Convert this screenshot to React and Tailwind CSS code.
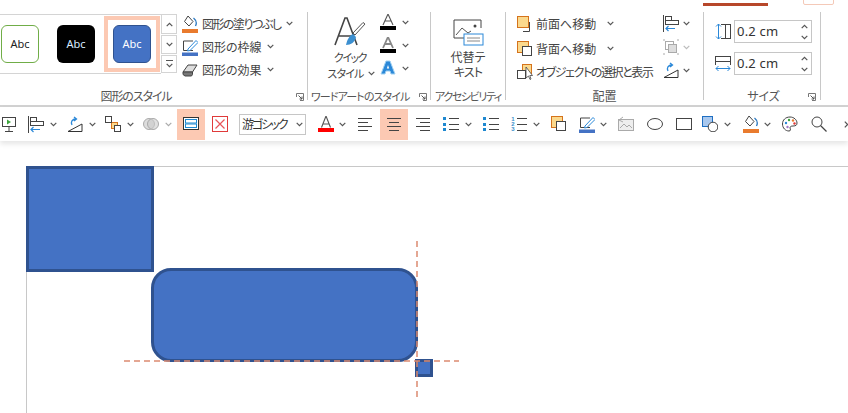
import React from "react";

const jp = "font-['Noto_Sans_CJK_JP','Liberation_Sans',sans-serif] [font-feature-settings:'palt']";

const Chev = ({ className = "", color = "#555" }) => (
  <svg width="7" height="5" viewBox="0 0 7 5" className={`shrink-0 ${className}`}>
    <path d="M.7 .8 3.5 3.6 6.3 .8" fill="none" stroke={color} strokeWidth="1.2" />
  </svg>
);

const Ic = ({ w = 16, h = 16, className = "", children }) => (
  <svg width={w} height={h} viewBox={`0 0 ${w} ${h}`} className={`shrink-0 ${className}`}>
    {children}
  </svg>
);

const Launcher = ({ className = "" }) => (
  <Ic w={8} h={8} className={className}>
    <path d="M.5 4V.5H7.5V7.5H4" fill="none" stroke="#777" />
    <path d="M2.5 2.5 6 6M6 3.5V6H3.5" fill="none" stroke="#555" />
  </Ic>
);

const Group = ({ label, w, children, launcher, labelClass = "", textClass = "text-[12px]" }) => (
  <div className={`${w} h-[88px] mt-[12px] border-r border-[#c8c8c8] flex flex-col shrink-0 relative`}>
    <div className="flex-1 min-h-0 flex">{children}</div>
    <div className={`h-[16px] -mb-[4px] flex items-center ${labelClass}`}>
      <span className={`leading-[16px] text-[#555] whitespace-nowrap ${textClass}`}>{label}</span>
      {launcher}
    </div>
  </div>
);

const Thumb = ({ className, text }) => (
  <div className={`w-[38px] h-[38px] rounded-[6px] flex items-center justify-center text-[11px] font-['Noto_Sans',sans-serif] ${className} ${text}`}>
    Abc
  </div>
);

const Cmd = ({ icon, label, chevClass = "ml-[5px]", textClass = "ml-[4px] text-[12px]" }) => (
  <div className="flex items-center h-[23px]">
    <div className="w-[16px] h-[18px] flex items-center justify-center">{icon}</div>
    <span className={`text-[#444] whitespace-nowrap ${textClass}`}>{label}</span>
    <Chev className={chevClass} />
  </div>
);

const BucketIcon = ({ bar = "#e97b2e" }) => (
  <Ic w={16} h={18}>
    <path d="M6 1 11 6.5 7 11 2.5 6.5Z" fill="#fff" stroke="#444" />
    <path d="M11.5 3c2.5 2 3.5 5 2 8" fill="none" stroke="#2b78c0" strokeWidth="1.3" />
    <rect y="14" width="16" height="4" fill={bar} />
  </Ic>
);

const PenIcon = () => (
  <Ic w={16} h={18}>
    <path d="M11 3H1.5V12.5H11" fill="none" stroke="#444" />
    <path d="M6 11 14 2.5 16 4.5 8 12.5 5.5 13Z" fill="#fff" stroke="#2b88d8" />
    <rect y="14.5" width="16" height="3.5" fill="#4472c4" />
  </Ic>
);

const EraserIcon = () => (
  <Ic w={16} h={16}>
    <path d="M1 10 6 3H15L10.5 10Z" fill="#ddd" stroke="#444" />
    <path d="M1 10V12.5L3 14H9.5L10.5 12.5V10Z" fill="#777" stroke="#444" />
  </Ic>
);

const BigA = () => (
  <Ic w={32} h={30}>
    <path d="M1 28 11 1H13L23 28M5 19H19" fill="none" stroke="#444" strokeWidth="1.6" />
    <path d="M29 5.5 31 7 21 18 19 16Z" fill="#fff" stroke="#555" />
    <path d="M12 28c1-5 3-9 7-11l3 3c-1 5-5 8-10 8Z" fill="#3b8fd0" />
  </Ic>
);

const SmallA = ({ outline, blue }) => (
  <Ic w={16} h={16}>
    {blue ? (
      <>
        <path d="M1 14 6 1H10L15 14H11L10 11H6L5 14Z" fill="#2b88d8" stroke="#9fd0f2" />
        <path d="M6.8 8.5 8 5 9.2 8.5Z" fill="#fff" />
      </>
    ) : (
      <>
        <path d="M3 11 8 0 13 11M5 7H11" fill="none" stroke={outline ? "#888" : "#555"} strokeWidth={outline ? 1.8 : 1.1} />
        <rect y="12" width="16" height="4" fill="#000" />
      </>
    )}
  </Ic>
);

const AltIcon = () => (
  <Ic w={31} h={27}>
    <path d="M20 19H1V1H28V9" fill="none" stroke="#444" />
    <path d="M3 16 9 9l6 5 3-2" fill="none" stroke="#555" />
    <circle cx="22" cy="7" r="1.5" fill="#444" />
    <rect x="11" y="15" width="19" height="11" fill="#fff" stroke="#2b88d8" />
    <path d="M14 19H27M14 22H27" stroke="#888" />
  </Ic>
);

const FrontIcon = () => (
  <Ic w={16} h={16}>
    <path d="M6 15.5H12.5V6" fill="none" stroke="#444" />
    <rect x=".5" y=".5" width="11" height="11" fill="#fbd98d" stroke="#d5731c" />
  </Ic>
);

const BackIcon = () => (
  <Ic w={16} h={16}>
    <rect x=".5" y=".5" width="11" height="11" fill="#fbd98d" stroke="#d5731c" />
    <rect x="5.5" y="5.5" width="9" height="9" fill="#fff" stroke="#444" />
  </Ic>
);

const SelectIcon = () => (
  <Ic w={16} h={16}>
    <rect x="5.5" y=".5" width="9" height="9" fill="#fbd98d" stroke="#d5731c" />
    <rect x=".5" y="6.5" width="8" height="8" fill="#fff" stroke="#444" />
    <path d="M9 3V14L11.5 12 13 15.5 14 15 12.8 11.5H15.5Z" fill="#fff" stroke="#444" strokeWidth=".8" />
  </Ic>
);

const AlignIcon = () => (
  <Ic w={16} h={17}>
    <path d="M.5 0V17" stroke="#444" />
    <rect x="2.5" y="1.5" width="6" height="4" fill="#fff" stroke="#444" />
    <rect x="2.5" y="5.5" width="13" height="4" fill="#fff" stroke="#444" />
    <path d="M12 13.5H3M5.5 11 3 13.5l2.5 2.5" fill="none" stroke="#2b88d8" strokeWidth="1.2" />
  </Ic>
);

const GroupIcon = () => (
  <Ic w={16} h={16}>
    <rect x="2.5" y="2.5" width="8" height="8" fill="none" stroke="#aaa" />
    <rect x="5.5" y="5.5" width="8" height="8" fill="#ddd" stroke="#aaa" />
    <path d="M0 1H2M14 1H16M0 15H2M14 15H16" stroke="#aaa" />
  </Ic>
);

const RotateIcon = () => (
  <Ic w={16} h={16}>
    <path d="M1 15.5 15 8V15.5Z" fill="#fff" stroke="#333" />
    <path d="M5 9C3.5 6 5 3 9 3M7 1 9.5 3 7 5" fill="none" stroke="#2b88d8" strokeWidth="1.3" />
  </Ic>
);

const HeightIcon = () => (
  <Ic w={16} h={17}>
    <path d="M3.5 1V16M1 3.5 3.5 1 6 3.5M1 13.5 3.5 16 6 13.5" fill="none" stroke="#2b88d8" />
    <rect x="10.5" y="1.5" width="5" height="14" fill="#fff" stroke="#444" />
    <path d="M6 1.5H10M6 15.5H10" stroke="#444" />
  </Ic>
);

const WidthIcon = () => (
  <Ic w={16} h={17}>
    <rect x=".5" y="1.5" width="15" height="5" fill="#fff" stroke="#444" />
    <path d="M.5 7V10M15.5 7V10" stroke="#444" />
    <path d="M1 13.5H15M3.5 11 1 13.5 3.5 16M12.5 11 15 13.5 12.5 16" fill="none" stroke="#2b88d8" />
  </Ic>
);

const Spin = ({ label }) => (
  <div className="w-[78px] h-[23px] border border-[#c6c6c6] flex items-center pl-[2px] bg-white">
    <span className="text-[13px] text-[#333] font-['Noto_Sans',sans-serif] flex-1 tracking-[0.2px]">{label}</span>
    <div className="w-[14px] flex flex-col items-center gap-[6px]">
      <Chev className="rotate-180" />
      <Chev />
    </div>
  </div>
);

const Lines = ({ rows }) => (
  <Ic w={16} h={14}>
    {rows.map((r, i) => (
      <path key={i} d={`M${r[0]} ${r[1]}.5H${r[2]}`} stroke="#444" />
    ))}
  </Ic>
);

const Bullets = () => (
  <Ic w={16} h={15}>
    {[0, 6, 11].map((y) => (
      <rect key={y} y={y} width="3" height="3" fill="#1e88d0" />
    ))}
    <path d="M6 1.5H16M6 7.5H16M6 12.5H16" stroke="#444" />
  </Ic>
);

const Numbers = () => (
  <div className="w-[16px] h-[15px] flex items-center gap-[2px]">
    <div className="w-[4px] flex flex-col items-center text-[6px] leading-[5px] font-bold text-[#3a90cc] font-['Liberation_Sans',sans-serif]">
      <span>1</span>
      <span>2</span>
      <span>3</span>
    </div>
    <Ic w={10} h={15}>
      <path d="M0 1.5H10M0 7.5H10M0 13.5H10" stroke="#444" />
    </Ic>
  </div>
);

const Toolbar = () => (
  <div className="h-[34px] flex items-center bg-white relative z-10 shadow-[0_3px_5px_rgba(0,0,0,0.10)]">
    <Ic className="ml-[2px]">
      <rect x=".5" y="1.5" width="13" height="9" fill="#fff" stroke="#444" />
      <path d="M5 3.5 9 6 5 8.5Z" fill="#3ca63c" />
      <path d="M7 11V15M3 15.5H11" stroke="#444" />
    </Ic>
    <span className="ml-[10px]"><AlignIcon /></span>
    <Chev className="ml-[6px]" />
    <span className="ml-[10px]"><RotateIcon /></span>
    <Chev className="ml-[6px]" />
    <Ic className="ml-[9px]">
      <rect x="6.5" y="6.5" width="6" height="6" fill="#fbd98d" stroke="#d5731c" />
      <rect x=".5" y=".5" width="6" height="6" fill="#fff" stroke="#444" />
      <rect x="9.5" y="9.5" width="6" height="6" fill="#fff" stroke="#444" />
    </Ic>
    <Chev className="ml-[6px]" />
    <Ic className="ml-[9px]">
      <circle cx="6" cy="8" r="5.5" fill="#ddd" stroke="#aaa" />
      <circle cx="10" cy="8" r="5.5" fill="#ccc" fillOpacity=".6" stroke="#aaa" />
    </Ic>
    <Chev className="ml-[6px]" color="#aaa" />
    <div className="ml-[5px] w-[28px] h-[31px] shrink-0 bg-[#fcc9b3] flex items-center justify-center">
      <Ic>
        <rect x=".5" y="1.5" width="15" height="12" fill="#fff" stroke="#333" />
        <rect x="2.5" y="3.5" width="11" height="3.5" fill="#fff" stroke="#1e88d0" />
        <rect x="2.5" y="8" width="11" height="3.5" fill="#fff" stroke="#1e88d0" />
      </Ic>
    </div>
    <Ic className="ml-[7px]">
      <rect x=".5" y=".5" width="15" height="15" fill="#fff" stroke="#e03a3a" />
      <path d="M3.5 3.5 12.5 12.5M12.5 3.5 3.5 12.5" stroke="#e8555a" strokeWidth="1.2" />
    </Ic>
    <div className="ml-[11px] w-[67px] h-[21px] shrink-0 border border-[#c6c6c6] flex items-center pl-[2px]">
      <span className="text-[12px] tracking-[-2px] text-[#333] whitespace-nowrap flex-1">游ゴシック</span>
      <Chev className="mr-[2px]" />
    </div>
    <Ic className="ml-[12px]">
      <path d="M3.5 11.5 8 0 12.5 11.5M5 8H11" fill="none" stroke="#555" strokeWidth="1.1" />
      <rect y="12" width="16" height="4" fill="#f00" />
    </Ic>
    <Chev className="ml-[5px]" />
    <span className="ml-[11px]"><Lines rows={[[1, 1, 15], [1, 5, 11], [1, 9, 15], [1, 13, 11]]} /></span>
    <div className="ml-[7px] w-[28px] h-[31px] shrink-0 bg-[#fcc9b3] flex items-center justify-center">
      <Lines rows={[[1, 1, 15], [3, 5, 13], [1, 9, 15], [3, 13, 13]]} />
    </div>
    <span className="ml-[7px]"><Lines rows={[[1, 1, 15], [5, 5, 15], [1, 9, 15], [5, 13, 15]]} /></span>
    <span className="ml-[12px]"><Bullets /></span>
    <Chev className="ml-[6px]" />
    <span className="ml-[11px]"><Bullets /></span>
    <span className="ml-[12px]"><Numbers /></span>
    <Chev className="ml-[6px]" />
    <span className="ml-[11px]"><BackIcon /></span>
    <span className="ml-[12px]"><PenIcon /></span>
    <Chev className="ml-[5px]" />
    <Ic className="ml-[11px]">
      <rect x=".5" y="3.5" width="15" height="11" fill="#eee" stroke="#aaa" />
      <path d="M2 12 6 8l3 3 2-2 3 3" fill="none" stroke="#aaa" />
      <path d="M1 4 5 1M5 6 1 4" fill="none" stroke="#aaa" />
    </Ic>
    <Ic w={16} h={12} className="ml-[13px]">
      <ellipse cx="8" cy="6" rx="7.5" ry="5.5" fill="#fff" stroke="#444" />
    </Ic>
    <Ic w={16} h={12} className="ml-[13px]">
      <rect x=".5" y=".5" width="15" height="11" fill="#fff" stroke="#444" />
    </Ic>
    <Ic className="ml-[10px]">
      <rect x=".5" y=".5" width="10" height="10" fill="#a9c8ee" stroke="#1f6fc2" />
      <circle cx="11" cy="11" r="4.8" fill="#fff" stroke="#444" />
    </Ic>
    <Chev className="ml-[6px]" />
    <span className="ml-[12px]"><BucketIcon /></span>
    <Chev className="ml-[5px]" />
    <Ic className="ml-[11px]">
      <path d="M8 1C3.5 1 .5 4 .5 8s3 7 6.5 7c2 0 1.5-2 1-3 0-1.5 1-2 3-2 3 0 4-1 4-3 0-3-3-6-7-6Z" fill="#fff" stroke="#444" />
      <circle cx="4" cy="7" r="1.2" fill="#2b88d8" />
      <circle cx="7" cy="4" r="1.2" fill="#3ca63c" />
      <circle cx="11" cy="4.5" r="1.2" fill="#e97b2e" />
      <circle cx="12.5" cy="7.5" r="1.2" fill="#e03a3a" />
      <circle cx="5.5" cy="11" r="1.2" fill="#a678c8" />
    </Ic>
    <Ic className="ml-[13px]">
      <circle cx="6" cy="6" r="5" fill="none" stroke="#444" />
      <path d="M9.5 9.5 15.5 15.5" stroke="#444" strokeWidth="1.2" />
    </Ic>
    <Chev className="ml-[16px] -rotate-90" />
  </div>
);

const Canvas = () => (
  <div className="relative flex-1 bg-white overflow-hidden">
    <div className="absolute left-[26px] top-[25px] right-0 h-px bg-[#c8c8c8]" />
    <div className="absolute left-[26px] top-[25px] bottom-0 w-px bg-[#c8c8c8]" />
    <div className="absolute left-[26px] top-[25px] w-[128px] h-[106px] bg-[#4472c4] border-[3px] border-[#2f528f]" />
    <div className="absolute left-[151px] top-[127px] w-[267px] h-[94px] bg-[#4472c4] border-[3px] border-[#2f528f] rounded-[20px]" />
    <div className="absolute left-[415px] top-[218px] w-[18px] h-[18px] bg-[#4472c4] border-[3px] border-[#2f528f]" />
    {/* dashed snap guides */}
    <svg width="2" height="160" className="absolute left-[416px] top-[100px]">
      <path d="M1 0V160" stroke="#dc8a70" strokeWidth="1.5" strokeDasharray="6 4" />
    </svg>
    <svg width="335" height="2" className="absolute left-[124px] top-[219px]">
      <path d="M0 1H335" stroke="#dc8a70" strokeWidth="1.5" strokeDasharray="6 4" />
    </svg>
  </div>
);

export default function App() {
  return (
    <div className={`w-[848px] h-[413px] overflow-hidden bg-white flex flex-col relative ${jp}`}>
      <div className="h-[105px] flex bg-white relative">
        <div className="absolute left-[703px] top-[3px] w-[65px] h-[3px] bg-[#b7472a]" />
        <div className="absolute left-[803px] -top-[6px] w-[31px] h-[11px] border border-[#f4c9b8] rounded-[2px]" />

        <Group w="w-[308px]" label="図形のスタイル" textClass="text-[12px] tracking-[-1.1px]" labelClass="justify-center relative pr-[35px]" launcher={<Launcher className="absolute right-[3px] top-[5px]" />}>
          <div className="flex items-start">
            <div className="mt-[2px] w-[161px] h-[60px] border-y border-[#d4d4d4] flex items-center relative">
              <Thumb className="ml-[1px] bg-white border border-[#70ad47]" text="text-[#222]" />
              <Thumb className="ml-[18px] bg-black" text="text-[#d8ecff]" />
              <div className="ml-[9px] w-[56px] h-[56px] border-[4px] border-[#fcc9b3] flex items-center justify-center">
                <Thumb className="bg-[#4472c4] border border-[#2f528f]" text="text-white" />
              </div>
            </div>
            <div className="mt-[2px] w-[16px] h-[60px] flex flex-col gap-[1px]">
              <div className="h-[20px] border border-[#d4d4d4] flex items-center justify-center"><Chev className="rotate-180" /></div>
              <div className="h-[19px] border border-[#d4d4d4] flex items-center justify-center"><Chev /></div>
              <div className="h-[18px] border border-[#d4d4d4] flex flex-col items-center justify-center gap-[2px]">
                <div className="w-[7px] h-px bg-[#555]" />
                <Chev />
              </div>
            </div>
            <div className="ml-[5px] flex flex-col">
              <Cmd icon={<BucketIcon />} label="図形の塗りつぶし" textClass="ml-[4px] text-[12px] tracking-[-1.5px]" />
              <Cmd icon={<PenIcon />} label="図形の枠線" />
              <Cmd icon={<EraserIcon />} label="図形の効果" />
            </div>
          </div>
        </Group>

        <Group w="w-[123px]" label="ワードアートのスタイル" textClass="text-[11px] tracking-[-0.9px]" labelClass="relative pl-[3px]" launcher={<Launcher className="absolute right-[3px] top-[5px]" />}>
          <div className="w-[72px] pl-[12px] flex flex-col items-center pt-[5px]">
            <BigA />
            <div className="mt-[2px] text-[11px] tracking-[-1.5px] leading-[16px] text-[#444] text-center">クイック</div>
            <div className="flex items-center text-[11px] tracking-[-0.8px] leading-[16px] text-[#444] ml-[2px]">
              スタイル<Chev className="ml-[4px]" />
            </div>
          </div>
          <div className="flex flex-col pt-[2px] gap-[7px]">
            <div className="flex items-center gap-[6px]"><SmallA /><Chev /></div>
            <div className="flex items-center gap-[6px]"><SmallA outline /><Chev /></div>
            <div className="flex items-center gap-[6px]"><SmallA blue /><Chev /></div>
          </div>
        </Group>

        <Group w="w-[75px]" label="アクセシビリティ" textClass="text-[11px] tracking-[-1.4px]" labelClass="justify-center">
          <div className="w-full flex flex-col items-center pt-[7px]">
            <AltIcon />
            <div className="mt-[3px] text-[12px] leading-[15px] text-[#444]">代替テ</div>
            <div className="text-[12px] tracking-[-1px] leading-[15px] text-[#444]">キスト</div>
          </div>
        </Group>

        <Group w="w-[198px]" label="配置" labelClass="justify-center">
          <div className="ml-[11px] w-[146px] flex flex-col shrink-0">
            <Cmd icon={<FrontIcon />} label="前面へ移動" chevClass="ml-[11px]" textClass="ml-[3px] text-[12px]" />
            <div className="h-[2px]" />
            <Cmd icon={<BackIcon />} label="背面へ移動" chevClass="ml-[11px]" textClass="ml-[3px] text-[12px]" />
            <Cmd icon={<SelectIcon />} label="オブジェクトの選択と表示" chevClass="hidden" textClass="ml-[3px] text-[12px] tracking-[-1.4px]" />
          </div>
          <div className="flex flex-col gap-[7px] pt-[3px]">
            <div className="flex items-center gap-[4px]"><AlignIcon /><Chev /></div>
            <div className="flex items-center gap-[4px]"><GroupIcon /><Chev color="#bbb" /></div>
            <div className="flex items-center gap-[4px]"><RotateIcon /><Chev /></div>
          </div>
        </Group>

        <Group w="w-[117px]" label="サイズ" labelClass="justify-center relative pl-[3px]" launcher={<Launcher className="absolute right-[4px] top-[5px]" />}>
          <div className="ml-[11px] pt-[8px] flex flex-col gap-[9px]">
            <div className="flex items-center gap-[3px]"><HeightIcon /><Spin label="0.2 cm" /></div>
            <div className="flex items-center gap-[3px]"><WidthIcon /><Spin label="0.2 cm" /></div>
          </div>
        </Group>
      </div>
      <div className="h-[2px] bg-[#d2d2d2]" />
      <Toolbar />
      <Canvas />
    </div>
  );
}
